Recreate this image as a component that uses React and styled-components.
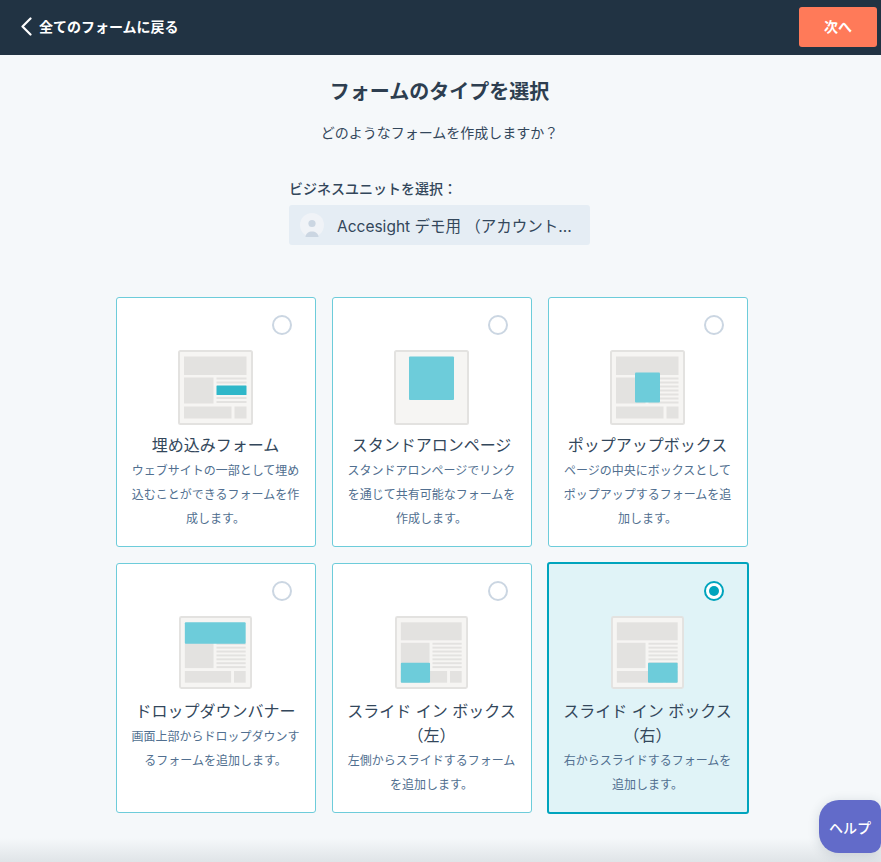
import styled, { createGlobalStyle } from "styled-components";

const GlobalStyle = createGlobalStyle`
    html, body {
        margin: 0;
        padding: 0;
        background: #f5f8fa;
    }
    body {
        font-family: Inter, "Noto Sans CJK JP", "Noto Sans", sans-serif;
        color: #33475b;
    }
`
const StyledPage = styled.div`
    height: 862px;
    overflow: hidden;
    position: relative;
`
const StyledHeader = styled.header`
    align-items: center;
    background: #213343;
    box-sizing: border-box;
    display: flex;
    height: 55px;
    justify-content: space-between;
    padding: 0 4px 1px 20px;
`
const BackLink = styled.a`
    align-items: center;
    color: #fff;
    display: flex;
    font-size: 14px;
    font-weight: 700;
    gap: 6px;
    line-height: 20px;
    padding-bottom: 1px;
`
const NextButton = styled.button`
    background: #ff7a59;
    border: none;
    border-radius: 3px;
    color: #fff;
    font-family: inherit;
    font-size: 14px;
    font-weight: 700;
    height: 40px;
    padding: 0 0 2px;
    width: 78px;
`
const Main = styled.main`
    display: flex;
    flex-direction: column;
    align-items: center;
`
const Title = styled.h1`
    color: #2d3e50;
    font-size: 20px;
    font-weight: 700;
    line-height: 30px;
    margin: 22px 0 0 -2px;
`
const Lead = styled.p`
    font-size: 14px;
    line-height: 24px;
    margin: 14px 0 0 -2px;
`
const UnitField = styled.div`
    margin: 32px 2px 0 0;
    width: 301px;
`
const UnitLabel = styled.div`
    font-size: 14px;
    font-weight: 500;
    line-height: 24px;
`
const UnitSelect = styled.div`
    align-items: center;
    background: #e5edf4;
    border-radius: 3px;
    display: flex;
    font-size: 15.5px;
    gap: 13px;
    height: 40px;
    margin-top: 4px;
    padding-left: 11px;
    white-space: nowrap;
`
const CardGrid = styled.div`
    align-self: flex-start;
    display: grid;
    gap: 16px;
    grid-template-columns: repeat(3, 200px);
    grid-auto-rows: 250px;
    margin: 52px 0 0 116px;
`
const Card = styled.div`
    background: ${(props) => (props.$selected ? "#e0f3f7" : "#fff")};
    border: ${(props) => (props.$selected ? "2px solid #00a4bd" : "1px solid #6dccda")};
    border-radius: 3px;
    box-sizing: border-box;
    display: flex;
    flex-direction: column;
    align-items: center;
    margin: ${(props) => (props.$selected ? "-1px" : "0")};
    padding: 52px 14.5px 0 13.5px;
    position: relative;
    text-align: center;
`
const Radio = styled.span`
    background: #fff;
    border: 2px solid ${(props) => (props.$selected ? "#00a4bd" : "#cbd6e2")};
    border-radius: 50%;
    box-sizing: border-box;
    height: 20px;
    position: absolute;
    right: 23px;
    top: 17px;
    width: 20px;
    &::after {
        background: #00a4bd;
        border-radius: 50%;
        content: "";
        display: ${(props) => (props.$selected ? "block" : "none")};
        height: 10px;
        margin: 3px;
        width: 10px;
    }
`
const Thumb = styled.svg`
    flex: none;
    height: ${(props) => (props.$compact ? "73px" : "75px")};
    margin: ${(props) => (props.$compact ? "0 1px 2px 0" : "0")};
    width: ${(props) => (props.$compact ? "73px" : "75px")};
`
const CardTitle = styled.h2`
    font-size: 16px;
    font-weight: 400;
    line-height: 24px;
    margin: 8px -6px 0;
`
const CardText = styled.p`
    color: #516f90;
    font-size: 12px;
    line-height: 24px;
    margin: 2px 0 0;
`
const HelpButton = styled.button`
    background: #626bc9;
    border: none;
    border-radius: 20px 10px 10px 20px;
    bottom: 9px;
    box-shadow: 0 2px 12px rgba(33, 51, 67, 0.16);
    color: #fff;
    font-family: inherit;
    font-size: 14px;
    font-weight: 500;
    height: 53px;
    padding: 0;
    position: absolute;
    right: 0;
    width: 62px;
`
const BottomShade = styled.div`
    background: linear-gradient(to bottom, rgba(33, 51, 67, 0), rgba(33, 51, 67, 0.1));
    bottom: 0;
    height: 24px;
    left: 0;
    pointer-events: none;
    position: absolute;
    right: 0;
`

const GREY = "#e3e2e0";
const TEAL = "#6dccda";

function Rows({ x, y, count, width }) {
    return Array.from({ length: count }, (_, i) => (
        <rect key={i} x={x} y={y + i * 4} width={width} height="2" fill={GREY} />
    ));
}

// thumbnail of where the form sits on the page
function Layout({ type, compact }) {
    const solo = type === "standalone";
    return (
        <Thumb viewBox="0 0 75 75" $compact={compact}>
            <rect x="1" y="1" width="73" height="73" rx="1.5" fill="#f6f5f3" stroke="#e3e2e0" strokeWidth="2" />
            {solo && <rect x="15" y="6.5" width="45" height="43.5" rx="1" fill={TEAL} />}
            {!solo && (
                <>
                    {type !== "banner" && <rect x="6" y="6.5" width="62.5" height="18.5" fill={GREY} />}
                    <rect x="6" y="27.5" width="29.5" height="26" fill={GREY} />
                    {type === "embed" ? (
                        <>
                            <Rows x={38.5} y={27.5} count={2} width={30} />
                            <Rows x={38.5} y={47} count={2} width={30} />
                            <rect x="38.5" y="35.5" width="30" height="9.5" rx="0.5" fill="#2fb7c9" />
                        </>
                    ) : (
                        <Rows x={38.5} y={27.5} count={7} width={30} />
                    )}
                    <rect x="6" y="56.5" width="47.5" height="12" fill={GREY} />
                    <rect x="56.5" y="56.5" width="12" height="12" fill={GREY} />
                    {type === "popup" && <rect x="25" y="22.5" width="25" height="30" rx="1" fill={TEAL} />}
                    {type === "banner" && <rect x="6" y="6.5" width="62.5" height="22" rx="1" fill={TEAL} />}
                    {type === "left" && <rect x="6" y="48" width="30" height="20.5" rx="1" fill={TEAL} />}
                    {type === "right" && <rect x="38" y="48" width="30.5" height="20.5" rx="1" fill={TEAL} />}
                </>
            )}
        </Thumb>
    );
}

const cards = [
    { type: "embed", title: "埋め込みフォーム", text: "ウェブサイトの一部として埋め込むことができるフォームを作成します。" },
    { type: "standalone", title: "スタンドアロンページ", text: "スタンドアロンページでリンクを通じて共有可能なフォームを作成します。" },
    { type: "popup", title: "ポップアップボックス", text: "ページの中央にボックスとしてポップアップするフォームを追加します。" },
    { type: "banner", title: "ドロップダウンバナー", text: "画面上部からドロップダウンするフォームを追加します。", compact: true },
    { type: "left", title: "スライド イン ボックス（左）", text: "左側からスライドするフォームを追加します。", compact: true },
    { type: "right", title: "スライド イン ボックス（右）", text: "右からスライドするフォームを追加します。", compact: true, selected: true },
];

function App() {
    return (
        <StyledPage>
            <GlobalStyle />
            <StyledHeader>
                <BackLink>
                    <svg width="13" height="19" viewBox="0 0 13 19" fill="none">
                        <path d="M10.5 1.5 L2.5 9.5 L10.5 17.5" stroke="#fff" strokeWidth="2.2" strokeLinecap="round" strokeLinejoin="round" />
                    </svg>
                    全てのフォームに戻る
                </BackLink>
                <NextButton>次へ</NextButton>
            </StyledHeader>
            <Main>
                <Title>フォームのタイプを選択</Title>
                <Lead>どのようなフォームを作成しますか？</Lead>
                <UnitField>
                    <UnitLabel>ビジネスユニットを選択：</UnitLabel>
                    <UnitSelect>
                        <svg width="24" height="24" viewBox="0 0 24 24">
                            <circle cx="12" cy="12" r="12" fill="#f0f3f7" />
                            <circle cx="12" cy="10.5" r="3.6" fill="#cbd6e2" />
                            <path d="M5.5 24 C5.5 16.5 18.5 16.5 18.5 24 Z" fill="#cbd6e2" />
                        </svg>
                        Accesight デモ用 （アカウント...
                    </UnitSelect>
                </UnitField>
                <CardGrid>
                    {cards.map(({ type, title, text, selected, compact }) => (
                        <Card key={type} $selected={selected}>
                            <Radio $selected={selected} />
                            <Layout type={type} compact={compact} />
                            <CardTitle>{title}</CardTitle>
                            <CardText>{text}</CardText>
                        </Card>
                    ))}
                </CardGrid>
            </Main>
            <BottomShade />
            <HelpButton>ヘルプ</HelpButton>
        </StyledPage>
    );
}

export default App;
